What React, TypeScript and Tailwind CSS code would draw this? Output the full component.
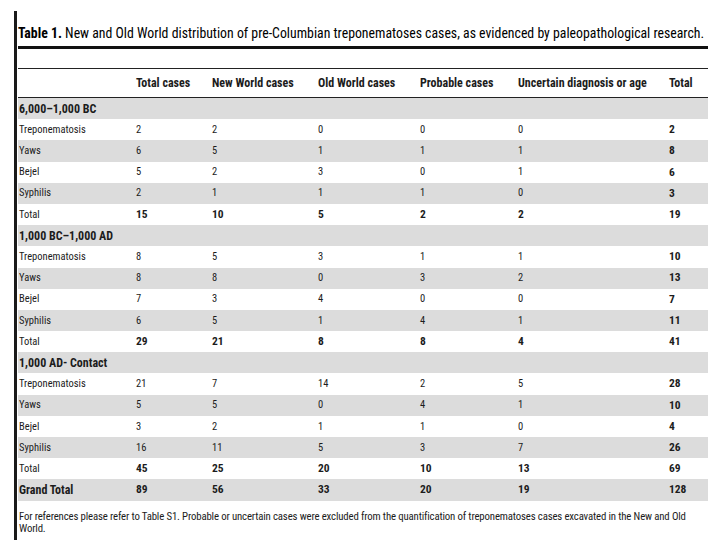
import React from "react";

type Row = { label: string; values: number[]; kind: "item" | "total" | "grand" };
type Group = { title: string; rows: Row[] };

const groups: Group[] = [
  {
    title: "6,000–1,000 BC",
    rows: [
      { label: "Treponematosis", values: [2, 2, 0, 0, 0, 2], kind: "item" },
      { label: "Yaws", values: [6, 5, 1, 1, 1, 8], kind: "item" },
      { label: "Bejel", values: [5, 2, 3, 0, 1, 6], kind: "item" },
      { label: "Syphilis", values: [2, 1, 1, 1, 0, 3], kind: "item" },
      { label: "Total", values: [15, 10, 5, 2, 2, 19], kind: "total" },
    ],
  },
  {
    title: "1,000 BC–1,000 AD",
    rows: [
      { label: "Treponematosis", values: [8, 5, 3, 1, 1, 10], kind: "item" },
      { label: "Yaws", values: [8, 8, 0, 3, 2, 13], kind: "item" },
      { label: "Bejel", values: [7, 3, 4, 0, 0, 7], kind: "item" },
      { label: "Syphilis", values: [6, 5, 1, 4, 1, 11], kind: "item" },
      { label: "Total", values: [29, 21, 8, 8, 4, 41], kind: "total" },
    ],
  },
  {
    title: "1,000 AD- Contact",
    rows: [
      { label: "Treponematosis", values: [21, 7, 14, 2, 5, 28], kind: "item" },
      { label: "Yaws", values: [5, 5, 0, 4, 1, 10], kind: "item" },
      { label: "Bejel", values: [3, 2, 1, 1, 0, 4], kind: "item" },
      { label: "Syphilis", values: [16, 11, 5, 3, 7, 26], kind: "item" },
      { label: "Total", values: [45, 25, 20, 10, 13, 69], kind: "total" },
    ],
  },
];

const grand: Row = { label: "Grand Total", values: [89, 56, 33, 20, 19, 128], kind: "grand" };

const headers = ["Total cases", "New World cases", "Old World cases", "Probable cases", "Uncertain diagnosis or age", "Total"];

// fixed column starts taken from the scan: 18, 136, 212, 318, 420, 518, 669
const cols = "grid grid-cols-[118px_76px_106px_102px_98px_151px_39px] items-center";

function DataRow({ row, shaded }: { row: Row; shaded: boolean }) {
  return (
    <div className={`${cols} h-[21.2px] ${shaded ? "bg-[#dcdcdc]" : "bg-white"}`}>
      <div className={row.kind === "grand" ? "pl-[1px] text-[12px] font-bold" : "pl-[1px] text-[10.5px]"}>
        {row.label}
      </div>
      {row.values.map((v, i) => {
        const bold = row.kind !== "item" || i === 5;
        return (
          <div key={i} className={bold ? "text-[11.5px] font-bold" : "text-[10.5px]"}>
            {v}
          </div>
        );
      })}
    </div>
  );
}

export default function App() {
  return (
    <div
      className="w-[720px] h-[540px] bg-white flex overflow-hidden text-[#1c1c1c]"
      style={{ fontFamily: '"Roboto Condensed", "DejaVu Sans Condensed", sans-serif' }}
    >
      <div className="ml-[14px] mt-[11px] w-[3px] bg-[#1a1a1a] shrink-0" />
      <div className="ml-[1px] w-[690px] flex flex-col">
        <div className="mt-[24px] h-[18px] leading-[18px] text-[13.8px] whitespace-nowrap text-black">
          <span className="font-bold">Table 1.</span> New and Old World distribution of pre-Columbian treponematoses
          cases, as evidenced by paleopathological research.
        </div>
        <div className="mt-[4px] h-[3px] bg-[#111]" />
        <div className="h-[19px]" />
        <div className="h-px bg-[#222]" />
        <div className={`${cols} h-[28px]`}>
          <div />
          {headers.map((h) => (
            <div key={h} className="text-[12px] font-bold whitespace-nowrap">
              {h}
            </div>
          ))}
        </div>
        <div className="h-px bg-[#222]" />
        {groups.map((g) => (
          <div key={g.title}>
            <div className="h-[21.2px] bg-[#dcdcdc] flex items-center pl-[1px] text-[12px] font-bold">{g.title}</div>
            {g.rows.map((r, i) => (
              <DataRow key={i} row={r} shaded={i % 2 === 1} />
            ))}
          </div>
        ))}
        <DataRow row={grand} shaded />
        <p className="mt-[10px] text-[10.8px] tracking-[-0.15px] leading-[12px] pl-[1px]">
          For references please refer to Table S1. Probable or uncertain cases were excluded from the quantification of
          treponematoses cases excavated in the New and Old World.
        </p>
      </div>
    </div>
  );
}
